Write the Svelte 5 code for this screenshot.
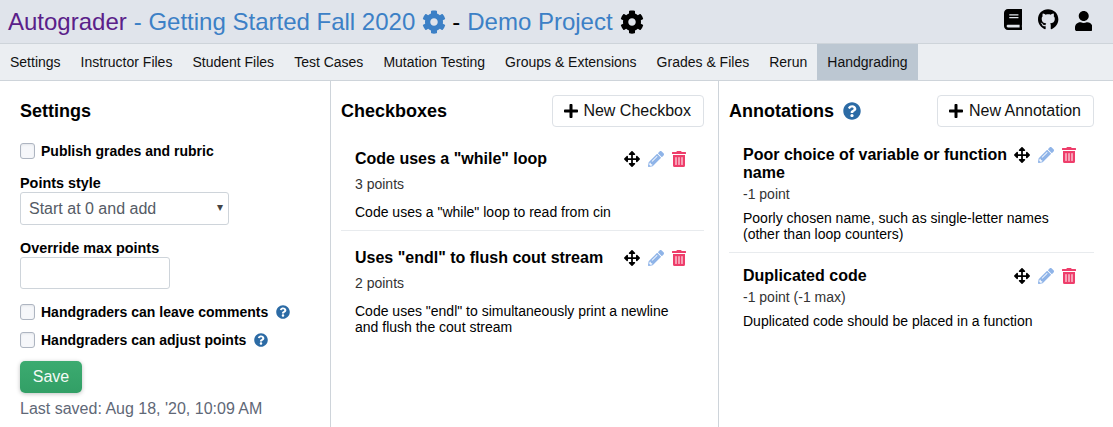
<script>
	const paths = {
		cog: 'M487.4 315.7l-42.6-24.6c4.3-23.2 4.3-47 0-70.2l42.6-24.6c4.9-2.8 7.1-8.6 5.5-14-11.1-35.6-30-67.8-54.7-94.6-3.8-4.1-10-5.1-14.8-2.3L380.8 110c-17.9-15.4-38.5-27.3-60.8-35.1V25.8c0-5.6-3.9-10.5-9.4-11.7-36.7-8.2-74.3-7.8-109.2 0-5.5 1.2-9.4 6.1-9.4 11.7V75c-22.2 7.9-42.8 19.8-60.8 35.1L88.7 85.5c-4.9-2.8-11-1.9-14.8 2.3-24.7 26.7-43.6 58.9-54.7 94.6-1.7 5.4.6 11.2 5.5 14L67.3 221c-4.3 23.2-4.3 47 0 70.2l-42.6 24.6c-4.9 2.8-7.1 8.6-5.5 14 11.1 35.6 30 67.8 54.7 94.6 3.8 4.1 10 5.1 14.8 2.3l42.6-24.6c17.9 15.4 38.5 27.3 60.8 35.1v49.2c0 5.6 3.9 10.5 9.4 11.7 36.7 8.2 74.3 7.8 109.2 0 5.5-1.2 9.4-6.1 9.4-11.7v-49.2c22.2-7.9 42.8-19.8 60.8-35.1l42.6 24.6c4.9 2.8 11 1.9 14.8-2.3 24.7-26.7 43.6-58.9 54.7-94.6 1.5-5.5-.7-11.3-5.6-14.1zM256 336c-44.1 0-80-35.9-80-80s35.9-80 80-80 80 35.9 80 80-35.9 80-80 80z',
		book: 'M448 360V24c0-13.3-10.7-24-24-24H96C43 0 0 43 0 96v320c0 53 43 96 96 96h328c13.3 0 24-10.7 24-24v-16c0-7.5-3.5-14.3-8.9-18.7-4.2-15.4-4.2-59.3 0-74.7 5.4-4.3 8.9-11.1 8.9-18.6zM128 134c0-3.3 2.7-6 6-6h212c3.3 0 6 2.7 6 6v20c0 3.3-2.7 6-6 6H134c-3.3 0-6-2.7-6-6v-20zm0 64c0-3.3 2.7-6 6-6h212c3.3 0 6 2.7 6 6v20c0 3.3-2.7 6-6 6H134c-3.3 0-6-2.7-6-6v-20zm253.4 250H96c-17.7 0-32-14.3-32-32 0-17.6 14.4-32 32-32h285.4c-1.9 17.1-1.9 46.9 0 64z',
		user: 'M224 256c70.7 0 128-57.3 128-128S294.7 0 224 0 96 57.3 96 128s57.3 128 128 128zm89.6 32h-16.7c-22.2 10.2-46.9 16-72.9 16s-50.6-5.8-72.9-16h-16.7C60.2 288 0 348.2 0 422.4V464c0 26.5 21.5 48 48 48h352c26.5 0 48-21.5 48-48v-41.6c0-74.2-60.2-134.4-134.4-134.4z',
		github: 'M165.9 397.4c0 2-2.3 3.6-5.2 3.6-3.3.3-5.6-1.3-5.6-3.6 0-2 2.3-3.6 5.2-3.6 3-.3 5.6 1.3 5.6 3.6zm-31.1-4.5c-.7 2 1.3 4.3 4.3 4.9 2.6 1 5.6 0 6.2-2s-1.3-4.3-4.3-5.2c-2.6-.7-5.5.3-6.2 2.3zm44.2-1.7c-2.9.7-4.9 2.6-4.6 4.9.3 2 2.9 3.3 5.9 2.6 2.9-.7 4.9-2.6 4.6-4.6-.3-1.9-3-3.2-5.9-2.9zM244.8 8C106.1 8 0 113.3 0 252c0 110.9 69.8 205.8 169.5 239.2 12.8 2.3 17.3-5.6 17.3-12.1 0-6.2-.3-40.4-.3-61.4 0 0-70 15-84.7-29.8 0 0-11.4-29.1-27.8-36.6 0 0-22.9-15.7 1.6-15.4 0 0 24.9 2 38.6 25.8 21.9 38.6 58.6 27.5 72.9 20.9 2.3-16 8.8-27.1 16-33.7-55.9-6.2-112.3-14.3-112.3-110.5 0-27.5 7.6-41.3 23.6-58.9-2.6-6.5-11.1-33.3 2.6-67.9 20.9-6.5 69 27 69 27 20-5.6 41.5-8.5 62.8-8.5s42.8 2.9 62.8 8.5c0 0 48.1-33.6 69-27 13.7 34.7 5.2 61.4 2.6 67.9 16 17.7 25.8 31.5 25.8 58.9 0 96.5-58.9 104.2-114.8 110.5 9.2 7.9 17 22.9 17 46.4 0 33.7-.3 75.4-.3 83.6 0 6.5 4.6 14.4 17.3 12.1C428.2 457.8 496 362.9 496 252 496 113.3 383.5 8 244.8 8zM97.2 352.9c-1.3 1-1 3.3.7 5.2 1.6 1.6 3.9 2.3 5.2 1 1.3-1 1-3.3-.7-5.2-1.6-1.6-3.9-2.3-5.2-1zm-10.8-8.1c-.7 1.3.3 2.9 2.3 3.9 1.6 1 3.6.7 4.3-.7.7-1.3-.3-2.9-2.3-3.9-2-.6-3.6-.3-4.3.7zm32.4 35.6c-1.6 1.3-1 4.3 1.3 6.2 2.3 2.3 5.2 2.6 6.5 1 1.3-1.3.7-4.3-1.3-6.2-2.2-2.3-5.2-2.6-6.5-1zm-11.4-14.7c-1.6 1-1.6 3.6 0 5.9 1.6 2.3 4.3 3.3 5.6 2.3 1.6-1.3 1.6-3.9 0-6.2-1.4-2.3-4-3.3-5.6-2z',
		question: 'M504 256c0 136.997-111.043 248-248 248S8 392.997 8 256C8 119.083 119.043 8 256 8s248 111.083 248 248zM262.655 90c-54.497 0-89.255 22.957-116.549 63.758-3.536 5.286-2.353 12.415 2.715 16.258l34.699 26.31c5.205 3.947 12.621 3.008 16.665-2.122 17.864-22.658 30.113-35.797 57.303-35.797 20.429 0 45.698 13.148 45.698 32.958 0 14.976-12.363 22.667-32.534 33.976C247.128 238.528 216 254.941 216 296v4c0 6.627 5.373 12 12 12h56c6.627 0 12-5.373 12-12v-1.333c0-28.462 83.186-29.647 83.186-106.667 0-58.002-60.165-102-116.531-102zM256 338c-25.365 0-46 20.635-46 46 0 25.364 20.635 46 46 46s46-20.636 46-46c0-25.365-20.635-46-46-46z',
		plus: 'M416 208H272V64c0-17.67-14.33-32-32-32h-32c-17.67 0-32 14.33-32 32v144H32c-17.67 0-32 14.33-32 32v32c0 17.67 14.33 32 32 32h144v144c0 17.67 14.33 32 32 32h32c17.67 0 32-14.33 32-32V304h144c17.67 0 32-14.33 32-32v-32c0-17.67-14.33-32-32-32z',
		move: 'M352.201 425.775l-79.196 79.196c-9.373 9.373-24.568 9.373-33.941 0l-79.196-79.196c-15.119-15.119-4.411-40.971 16.971-40.97h51.162L228 284H127.196v51.162c0 21.382-25.851 32.09-40.971 16.971L7.029 272.937c-9.373-9.373-9.373-24.569 0-33.941L86.225 159.8c15.119-15.119 40.971-4.411 40.971 16.971V228H228V127.196h-51.23c-21.382 0-32.09-25.851-16.971-40.971l79.196-79.196c9.373-9.373 24.568-9.373 33.941 0l79.196 79.196c15.119 15.119 4.411 40.971-16.971 40.971h-51.162V228h100.804v-51.162c0-21.382 25.851-32.09 40.97-16.971l79.196 79.196c9.373 9.373 9.373 24.569 0 33.941L425.773 352.2c-15.119 15.119-40.971 4.411-40.97-16.971V284H284v100.804h51.23c21.382 0 32.09 25.851 16.971 40.971z',
		pencil: 'M497.9 142.1l-46.1 46.1c-4.7 4.7-12.3 4.7-17 0l-111-111c-4.7-4.7-4.7-12.3 0-17l46.1-46.1c18.7-18.7 49.1-18.7 67.9 0l60.1 60.1c18.8 18.7 18.8 49.1 0 67.9zM284.2 99.8L21.6 362.4.4 483.9c-2.9 16.4 11.4 30.6 27.8 27.8l121.5-21.3 262.6-262.6c4.7-4.7 4.7-12.3 0-17l-111-111c-4.8-4.7-12.4-4.7-17.1 0zM124.1 339.9c-5.5-5.5-5.5-14.3 0-19.8l154-154c5.5-5.5 14.3-5.5 19.8 0s5.5 14.3 0 19.8l-154 154c-5.5 5.5-14.3 5.5-19.8 0zM88 424h48v36.3l-64.5 11.3-31.1-31.1L51.7 376H88v48z',
		trash: 'M32 464a48 48 0 0 0 48 48h288a48 48 0 0 0 48-48V128H32zm272-256a16 16 0 0 1 32 0v224a16 16 0 0 1-32 0zm-96 0a16 16 0 0 1 32 0v224a16 16 0 0 1-32 0zm-96 0a16 16 0 0 1 32 0v224a16 16 0 0 1-32 0zM432 32H312l-9.4-18.7A24 24 0 0 0 281.1 0H166.8a23.72 23.72 0 0 0-21.4 13.3L136 32H16A16 16 0 0 0 0 48v32a16 16 0 0 0 16 16h416a16 16 0 0 0 16-16V48a16 16 0 0 0-16-16z'
	};
	const widths = { book: 448, user: 448, github: 496, plus: 448, trash: 448 };

	const tabs = ['Settings', 'Instructor Files', 'Student Files', 'Test Cases', 'Mutation Testing', 'Groups & Extensions', 'Grades & Files', 'Rerun', 'Handgrading'];

	const checkboxes = [
		{ title: 'Code uses a "while" loop', points: '3 points', text: 'Code uses a "while" loop to read from cin' },
		{ title: 'Uses "endl" to flush cout stream', points: '2 points', text: 'Code uses "endl" to simultaneously print a newline and flush the cout stream' }
	];
	const annotations = [
		{ title: 'Poor choice of variable or function name', points: '-1 point', text: 'Poorly chosen name, such as single-letter names (other than loop counters)' },
		{ title: 'Duplicated code', points: '-1 point (-1 max)', text: 'Duplicated code should be placed in a function' }
	];
</script>

{#snippet icon(name, cls)}
	<svg class={cls} viewBox="0 0 {widths[name] ?? 512} 512" aria-hidden="true"><path fill="currentColor" d={paths[name]} /></svg>
{/snippet}

{#snippet item(entry)}
	<div class="item">
		<div class="item-head">
			<div class="item-title">{entry.title}</div>
			<div class="item-icons">
				{@render icon('move', 'i-move')}
				{@render icon('pencil', 'i-pencil')}
				{@render icon('trash', 'i-trash')}
			</div>
		</div>
		<div class="item-points">{entry.points}</div>
		<div class="item-text">{entry.text}</div>
	</div>
{/snippet}

<div class="page">
	<header class="top">
		<div class="crumbs">
			<span class="brand">Autograder</span>
			<span class="link">- Getting Started Fall 2020</span>
			{@render icon('cog', 'cog blue')}
			<span class="dash">-</span>
			<span class="link">Demo Project</span>
			{@render icon('cog', 'cog')}
		</div>
		<div class="top-icons">
			{@render icon('book', 'top-icon')}
			{@render icon('github', 'top-icon')}
			{@render icon('user', 'top-icon low')}
		</div>
	</header>

	<nav class="tabs">
		{#each tabs as tab}
			<div class="tab" class:active={tab === 'Handgrading'}>{tab}</div>
		{/each}
	</nav>

	<main class="columns">
		<section class="col settings">
			<h2 class="settings-title">Settings</h2>
			<label class="check first"><span class="box"></span>Publish grades and rubric</label>

			<div class="field-label points-label">Points style</div>
			<div class="select">Start at 0 and add<span class="caret">▾</span></div>

			<div class="field-label max-label">Override max points</div>
			<div class="input"></div>

			<label class="check leave"><span class="box"></span>Handgraders can leave comments{@render icon('question', 'help')}</label>
			<label class="check adjust"><span class="box"></span>Handgraders can adjust points{@render icon('question', 'help')}</label>

			<button class="save">Save</button>
			<div class="saved">Last saved: Aug 18, '20, 10:09 AM</div>
		</section>

		<section class="col list checks">
			<div class="col-head">
				<h2>Checkboxes</h2>
				<button class="new">{@render icon('plus', 'plus')}New Checkbox</button>
			</div>
			{#each checkboxes as entry}
				{@render item(entry)}
			{/each}
		</section>

		<section class="col list notes">
			<div class="col-head">
				<h2>Annotations</h2>
				{@render icon('question', 'help big')}
				<button class="new">{@render icon('plus', 'plus')}New Annotation</button>
			</div>
			{#each annotations as entry}
				{@render item(entry)}
			{/each}
		</section>
	</main>
</div>

<style>
	:global(body) {
		margin: 0;
		font-family: "Liberation Sans", Arial, sans-serif;
		background: #fff;
		color: #000;
	}

	.page {
		height: 427px;
		overflow: hidden;
		display: flex;
		flex-direction: column;
	}

	.top {
		height: 43px;
		flex-shrink: 0;
		background: #e0e4eb;
		border-bottom: 1px solid #ced4da;
		display: flex;
		align-items: center;
		justify-content: space-between;
		padding: 0 21px 0 8px;
	}

	.crumbs {
		display: flex;
		align-items: center;
		font-size: 24px;
		line-height: 40px;
		white-space: nowrap;
	}

	.brand { color: #5a2089; margin-right: 7px; }
	.link { color: #3c80c6; }
	.dash { margin: 0 7px 0 6px; }

	.cog {
		width: 24px;
		height: 24px;
		margin-left: 7px;
		color: #000;
	}
	.cog.blue { color: #3c80c6; }

	.top-icons {
		display: flex;
		align-items: center;
		gap: 16px;
		padding-bottom: 5px;
	}

	.top-icon { height: 21px; }
	.top-icon.low { margin-top: 3px; height: 20px; }

	.tabs {
		height: 36px;
		flex-shrink: 0;
		background: #ebeef2;
		border-bottom: 1px solid #ced4da;
		display: flex;
	}

	.tab {
		padding: 0 10px;
		font-size: 14px;
		line-height: 36px;
		color: #111;
	}
	.tab.active { background: #bcc7d2; }

	.columns {
		flex: 1;
		display: grid;
		grid-template-columns: 331px 388px 1fr;
		min-height: 0;
	}

	.col {
		border-right: 1px solid #ced4da;
		min-width: 0;
	}
	.col:last-child { border-right: 0; }

	h2 {
		margin: 0;
		font-size: 18px;
		font-weight: 700;
		line-height: 22px;
	}

	.settings { padding: 19px 20px 0; }

	.check {
		display: flex;
		align-items: center;
		font-size: 14px;
		font-weight: 700;
		line-height: 20px;
	}
	.check.first { margin-top: 19px; }
	.check.leave { margin-top: 13px; }
	.check.adjust { margin-top: 8px; }

	.box {
		width: 15px;
		height: 16px;
		box-sizing: border-box;
		margin-right: 6px;
		background: #f6f7fa;
		border: 1px solid #aeb5c1;
		border-radius: 3px;
		box-shadow: inset 0 1px 2px #e3e6ea;
	}

	.help {
		width: 14px;
		height: 14px;
		margin-left: 8px;
		color: #2c6ba5;
	}
	.help.big {
		width: 18px;
		height: 18px;
		margin-left: 9px;
	}

	.field-label {
		font-size: 14.4px;
		font-weight: 700;
		line-height: 17px;
	}
	.points-label { margin-top: 14px; }
	.max-label { margin-top: 15px; }

	.select {
		position: relative;
		width: 209px;
		height: 33px;
		box-sizing: border-box;
		padding-left: 8px;
		border: 1px solid #ced4da;
		border-radius: 3px;
		font-size: 16px;
		line-height: 31px;
		color: #555b66;
	}

	.caret {
		position: absolute;
		right: 5px;
		top: -1px;
		font-size: 12px;
		color: #444;
	}

	.input {
		width: 150px;
		height: 32px;
		box-sizing: border-box;
		border: 1px solid #ced4da;
		border-radius: 3px;
	}

	.save {
		display: block;
		width: 62px;
		height: 32px;
		margin-top: 11px;
		padding: 0;
		border: 0;
		border-radius: 5px;
		background: linear-gradient(#3cab70, #329f66);
		color: #f4faf6;
		font: 16px "Liberation Sans", Arial, sans-serif;
		box-shadow: 0 1px 4px rgba(0, 0, 0, 0.25);
	}

	.saved {
		margin-top: 6px;
		font-size: 16px;
		line-height: 20px;
		color: #5f6877;
	}

	.col-head {
		height: 51px;
		box-sizing: border-box;
		display: flex;
		align-items: center;
		padding: 9px 14px 0 10px;
	}
	.notes .col-head { padding-right: 19px; }

	.new {
		margin-left: auto;
		height: 32px;
		padding: 0 12px 0 11px;
		display: flex;
		align-items: center;
		background: #fff;
		border: 1px solid #dde1e6;
		border-radius: 4px;
		font: 16px "Liberation Sans", Arial, sans-serif;
		color: #111;
	}

	.plus {
		height: 16px;
		width: 14px;
		margin-right: 5px;
		color: #000;
	}
	.notes .plus { margin-right: 6px; }

	.item {
		margin: 0 14px 0 10px;
		padding: 18px 18px 10px 14px;
		border-bottom: 1px solid #e8ebee;
		font-size: 14px;
		line-height: 16px;
	}
	.item:last-child { border-bottom: 0; }
	.notes .item {
		margin-right: 19px;
		padding-top: 14px;
	}

	.item-head {
		display: flex;
		align-items: flex-start;
		justify-content: space-between;
		gap: 6px;
	}

	.item-title {
		font-size: 16px;
		font-weight: 700;
		line-height: 18px;
	}

	.item-icons {
		display: flex;
		align-items: center;
		gap: 8px;
		flex-shrink: 0;
		margin-top: 1px;
	}

	.i-move { width: 16px; height: 16px; color: #000; }
	.i-pencil { width: 16px; height: 16px; color: #8fb4e8; }
	.i-trash { width: 14px; height: 16px; color: #ee3e6b; }

	.item-points {
		margin-top: 8px;
		color: #333;
	}
	.notes .item-points { margin-top: 4px; }

	.item-text { margin-top: 12px; }
	.notes .item-text { margin-top: 8px; }
</style>
